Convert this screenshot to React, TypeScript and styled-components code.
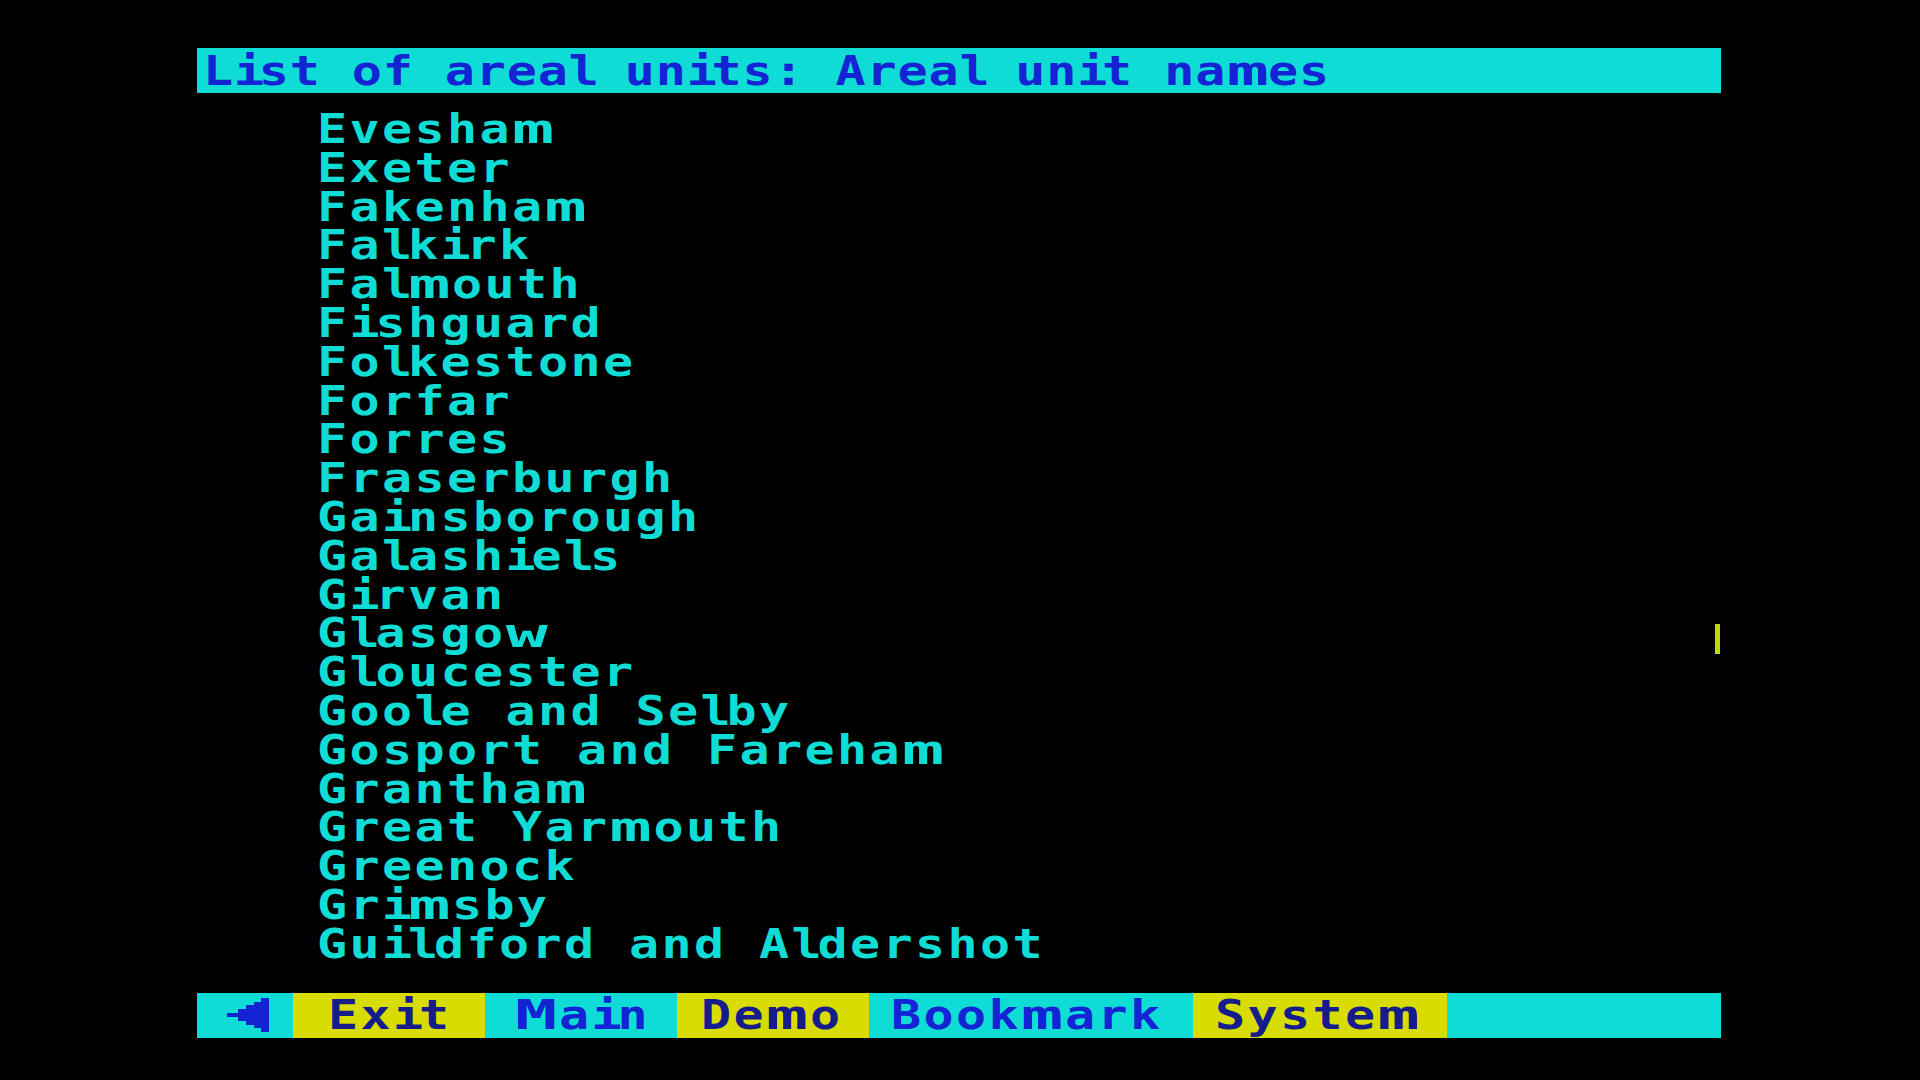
import React from "react";
import styled, { createGlobalStyle } from "styled-components";

const GlobalStyle = createGlobalStyle`
  html, body {
    margin: 0;
    padding: 0;
    background: #000;
  }
  body {
    width: 1920px;
    height: 1080px;
    overflow: hidden;
  }
`;

const CYAN = "#0fdcd4";
const YELLOW = "#d8dc00";
const BLUE = "#1424d4";
const NAVY = "#161c8c";

/* advance of one DejaVu Sans Mono glyph at 40px */
const ADV = 24.08;
const STRETCH = 1.25;

const Screen = styled.div`
  position: relative;
  width: 1524px;
  height: 1080px;
  box-sizing: border-box;
  margin-left: 197px;
  padding-top: 48px;
  display: flex;
  flex-direction: column;
  font-family: "DejaVu Sans Mono", "Liberation Mono", monospace;
  font-weight: bold;
`;

const TitleBar = styled.div`
  height: 45px;
  background: ${CYAN};
  color: ${BLUE};
  display: flex;
  align-items: center;
  padding-left: 6px;
`;

const BlockText = styled.span<{ $spacing: number }>`
  display: inline-block;
  font-size: 40px;
  letter-spacing: ${(p) => p.$spacing}px;
  white-space: pre;
  transform: scaleX(${STRETCH});
  transform-origin: left center;
`;

const NarrowGlyph = styled.span<{ $spacing: number }>`
  letter-spacing: ${(p) => p.$spacing}px;
`;

const WideGlyph = styled.span<{ $extra: number }>`
  display: inline-block;
  letter-spacing: 0;
  margin-right: ${(p) => p.$extra}px;
  transform: scaleX(1.4);
  transform-origin: left center;
`;

const NameList = styled.ul`
  list-style: none;
  margin: 17px 0 0 0;
  padding: 0 0 0 120px;
`;

const NameItem = styled.li`
  height: 38.8px;
  line-height: 38.8px;
  color: ${CYAN};
`;

const MenuBar = styled.div`
  margin-top: 29px;
  height: 45px;
  display: flex;
  background: ${CYAN};
`;

const MenuItem = styled.div<{ $w: number; $yellow?: boolean; $pad: number }>`
  width: ${(p) => p.$w}px;
  flex: none;
  height: 100%;
  box-sizing: border-box;
  padding-left: ${(p) => p.$pad}px;
  display: flex;
  align-items: center;
  background: ${(p) => (p.$yellow ? YELLOW : CYAN)};
  color: ${(p) => (p.$yellow ? NAVY : BLUE)};
`;

const BackButton = styled.div`
  width: 96px;
  flex: none;
  height: 100%;
  box-sizing: border-box;
  padding-left: 6px;
  display: flex;
  align-items: center;
  justify-content: center;
  background: ${CYAN};
`;

const Cursor = styled.div`
  position: absolute;
  left: 1518px;
  top: 624px;
  width: 5px;
  height: 30px;
  background: #c4d410;
`;

const WIDE = /[mwMW]/;
const NARROW = /[il]/;

/* Text in the screen's proportional font: most glyphs share one cell
   width, i/l are narrower, m/w wider. */
function ScreenText({ text, unit }: { text: string; unit: number }) {
  const base = unit / STRETCH - ADV;
  const narrow = (unit * 0.8) / STRETCH - ADV;
  const wideExtra = (unit * 1.35) / STRETCH - ADV;
  const parts: React.ReactNode[] = [];
  let buf = "";
  const flush = () => {
    if (buf) {
      parts.push(buf);
      buf = "";
    }
  };
  Array.from(text).forEach((ch, i) => {
    if (WIDE.test(ch)) {
      flush();
      parts.push(
        <WideGlyph key={i} $extra={wideExtra}>
          {ch}
        </WideGlyph>
      );
    } else if (NARROW.test(ch)) {
      flush();
      parts.push(
        <NarrowGlyph key={i} $spacing={narrow}>
          {ch}
        </NarrowGlyph>
      );
    } else {
      buf += ch;
    }
  });
  flush();
  return <BlockText $spacing={base}>{parts}</BlockText>;
}

const names = [
  "Evesham",
  "Exeter",
  "Fakenham",
  "Falkirk",
  "Falmouth",
  "Fishguard",
  "Folkestone",
  "Forfar",
  "Forres",
  "Fraserburgh",
  "Gainsborough",
  "Galashiels",
  "Girvan",
  "Glasgow",
  "Gloucester",
  "Goole and Selby",
  "Gosport and Fareham",
  "Grantham",
  "Great Yarmouth",
  "Greenock",
  "Grimsby",
  "Guildford and Aldershot",
];

const menu = [
  { label: "Exit", w: 192, yellow: true, pad: 35 },
  { label: "Main", w: 192, yellow: false, pad: 30 },
  { label: "Demo", w: 192, yellow: true, pad: 24 },
  { label: "Bookmark", w: 324, yellow: false, pad: 22 },
  { label: "System", w: 254, yellow: true, pad: 22 },
];

const BackArrow = () => (
  <svg width="42" height="36" viewBox="0 0 11 9" shapeRendering="crispEdges">
    <path
      fill={BLUE}
      d="M9 0h2v9h-2v-1h-2v-1h-2v-1h-2v-1h-3v-1h3v-1h2v-1h2v-1h2z"
    />
  </svg>
);

export default function App() {
  return (
    <>
      <GlobalStyle />
      <Screen>
        <TitleBar>
          <ScreenText text="List of areal units: Areal unit names" unit={31} />
        </TitleBar>
        <NameList>
          {names.map((n) => (
            <NameItem key={n}>
              <ScreenText text={n} unit={32.5} />
            </NameItem>
          ))}
        </NameList>
        <MenuBar>
          <BackButton>
            <BackArrow />
          </BackButton>
          {menu.map((m) => (
            <MenuItem key={m.label} $w={m.w} $yellow={m.yellow} $pad={m.pad}>
              <ScreenText text={m.label} unit={32.5} />
            </MenuItem>
          ))}
        </MenuBar>
        <Cursor />
      </Screen>
    </>
  );
}
